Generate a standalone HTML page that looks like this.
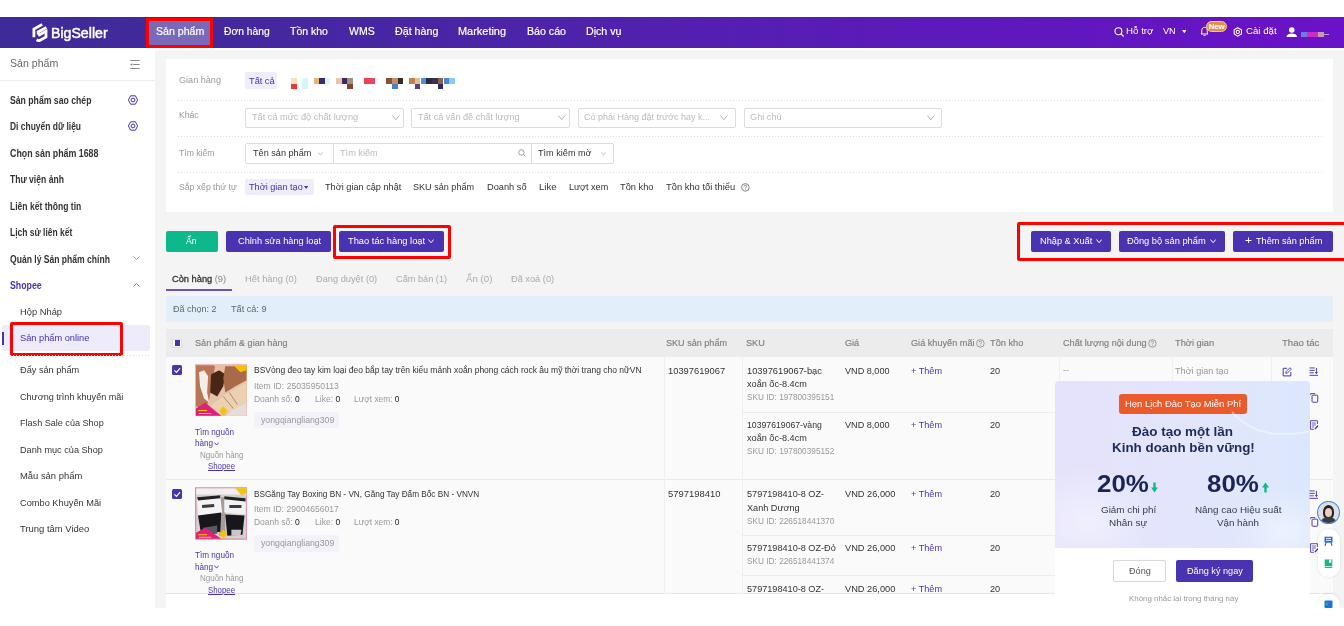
<!DOCTYPE html><html><head><meta charset="utf-8"><style>*{margin:0;padding:0}html,body{width:1344px;height:626px;overflow:hidden;background:#fff;position:relative;font-family:"Liberation Sans",sans-serif}
.t{position:absolute;white-space:nowrap;line-height:1}</style></head><body>
<div style="position:absolute;left:0px;top:17px;width:1344px;height:31px;background:linear-gradient(90deg,#3e2b97 0%,#4a25a6 35%,#5a1bb8 65%,#6a12c8 100%)"></div>
<div style="position:absolute;left:0px;top:48px;width:155px;height:560px;background:#fff"></div>
<div style="position:absolute;left:155px;top:50px;width:1189px;height:558px;background:#f4f4f4"></div>
<div style="position:absolute;left:146px;top:18px;width:67px;height:30px;background:#7a68b8"></div>
<div style="position:absolute;left:146px;top:18px;width:67px;height:30px;box-sizing:border-box;border:3px solid #f00"></div>
<div style="position:absolute;left:0px;top:80px;width:155px;height:1px;background:#ececec"></div>
<div style="position:absolute;left:2px;top:325px;width:148px;height:26px;background:#eeebfa;border-radius:3px"></div>
<div style="position:absolute;left:2px;top:332px;width:2px;height:13px;background:#4a33b0"></div>
<div style="position:absolute;left:9.7px;top:322.3px;width:113.6px;height:34.19999999999999px;box-sizing:border-box;border:3px solid #f00;border-radius:2px"></div>
<div style="position:absolute;left:165.6px;top:59.4px;width:1167.7px;height:153.1px;background:#fff"></div>
<div style="position:absolute;left:178px;top:99.6px;width:1144px;height:1.0px;background-image:linear-gradient(90deg,#ddd 50%,transparent 50%);background-size:3px 1px"></div>
<div style="position:absolute;left:178px;top:135.7px;width:1144px;height:1.0px;background-image:linear-gradient(90deg,#ddd 50%,transparent 50%);background-size:3px 1px"></div>
<div style="position:absolute;left:178px;top:172px;width:1144px;height:1px;background-image:linear-gradient(90deg,#ddd 50%,transparent 50%);background-size:3px 1px"></div>
<div style="position:absolute;left:245.4px;top:72px;width:31.299999999999983px;height:16.700000000000003px;background:#efedfb;border-radius:2px"></div>
<div style="position:absolute;left:245.3px;top:107.5px;width:158.3px;height:20.69999999999999px;box-sizing:border-box;border:1px solid #dcdcdc;border-radius:2px;background:#fff"></div>
<div style="position:absolute;left:411.2px;top:107.5px;width:158.40000000000003px;height:20.69999999999999px;box-sizing:border-box;border:1px solid #dcdcdc;border-radius:2px;background:#fff"></div>
<div style="position:absolute;left:577.6px;top:107.5px;width:158.0px;height:20.69999999999999px;box-sizing:border-box;border:1px solid #dcdcdc;border-radius:2px;background:#fff"></div>
<div style="position:absolute;left:744px;top:107.5px;width:198.29999999999995px;height:20.69999999999999px;box-sizing:border-box;border:1px solid #dcdcdc;border-radius:2px;background:#fff"></div>
<div style="position:absolute;left:245.3px;top:143px;width:368.99999999999994px;height:20.5px;box-sizing:border-box;border:1px solid #dcdcdc;border-radius:2px;background:#fff"></div>
<div style="position:absolute;left:332.5px;top:143px;width:1.0px;height:20.5px;background:#dcdcdc"></div>
<div style="position:absolute;left:531.3px;top:143px;width:1.0px;height:20.5px;background:#dcdcdc"></div>
<div style="position:absolute;left:245px;top:178.9px;width:69px;height:16.299999999999983px;background:#efedfb;border-radius:2px"></div>
<div style="position:absolute;left:165.6px;top:231px;width:52.599999999999994px;height:20.900000000000006px;background:#0db88a;border-radius:2px"></div>
<div style="position:absolute;left:226px;top:231px;width:105px;height:20.900000000000006px;background:#4a33b0;border-radius:2px"></div>
<div style="position:absolute;left:339.3px;top:231px;width:104.44999999999999px;height:20.900000000000006px;background:#4a33b0;border-radius:2px"></div>
<div style="position:absolute;left:333.3px;top:224.5px;width:118.0px;height:34.39999999999998px;box-sizing:border-box;border:3px solid #f00;border-radius:2px"></div>
<div style="position:absolute;left:1031.2px;top:231px;width:79.59999999999991px;height:20.5px;background:#4a33b0;border-radius:2px"></div>
<div style="position:absolute;left:1118.8px;top:231px;width:105.90000000000009px;height:20.5px;background:#4a33b0;border-radius:2px"></div>
<div style="position:absolute;left:1232.9px;top:231px;width:100.59999999999991px;height:20.5px;background:#4a33b0;border-radius:2px"></div>
<div style="position:absolute;left:1017.4px;top:221.5px;width:332.6px;height:39.69999999999999px;box-sizing:border-box;border:3px solid #f00;border-radius:2px"></div>
<div style="position:absolute;left:165.6px;top:289px;width:66.20000000000002px;height:2px;background:#6a52c6"></div>
<div style="position:absolute;left:165.6px;top:295.6px;width:1167.9px;height:26.599999999999966px;background:#e2eef9"></div>
<div style="position:absolute;left:165.6px;top:328.8px;width:1167.9px;height:27.80000000000001px;background:#ececec"></div>
<div style="position:absolute;left:172.3px;top:338.6px;width:9.699999999999989px;height:9.799999999999955px;box-sizing:border-box;border:1px solid #ddd;background:#fff"></div>
<div style="position:absolute;left:174.7px;top:340.2px;width:5.300000000000011px;height:5.400000000000034px;background:#4a33b0"></div>
<div style="position:absolute;left:165.6px;top:356.6px;width:1167.9px;height:236.89999999999998px;background:#fafafa"></div>
<div style="position:absolute;left:165.6px;top:479.3px;width:1167.9px;height:1.0px;background:#eaeaea"></div>
<div style="position:absolute;left:165.6px;top:593px;width:1167.9px;height:1px;background:#e6e6e6"></div>
<div style="position:absolute;left:165.6px;top:594px;width:1167.9px;height:14px;background:#fff"></div>
<div style="position:absolute;left:664.3px;top:356.6px;width:1.0px;height:236.89999999999998px;background:#efefef"></div>
<div style="position:absolute;left:742.4px;top:356.6px;width:1.0px;height:236.89999999999998px;background:#efefef"></div>
<div style="position:absolute;left:1059.4px;top:356.6px;width:1.0px;height:236.89999999999998px;background:#efefef"></div>
<div style="position:absolute;left:1171.5px;top:356.6px;width:1.0px;height:236.89999999999998px;background:#efefef"></div>
<div style="position:absolute;left:1271.2px;top:356.6px;width:1.0px;height:236.89999999999998px;background:#efefef"></div>
<div style="position:absolute;left:742.4px;top:411.6px;width:528.8000000000001px;height:1.0px;background:#ececec"></div>
<div style="position:absolute;left:742.4px;top:534.9px;width:528.8000000000001px;height:1.0px;background:#ececec"></div>
<div style="position:absolute;left:742.4px;top:575.4px;width:528.8000000000001px;height:1.0px;background:#ececec"></div>
<div style="position:absolute;left:172px;top:365.1px;width:10.400000000000006px;height:10.399999999999977px;background:#4a33b0;border-radius:1.5px"></div>
<svg style="position:absolute;left:172px;top:365.1px" width="10.4" height="10.4" viewBox="0 0 10 10"><path d="M2.3 5.2 L4.3 7.1 L7.8 3.1" stroke="#fff" stroke-width="1.1" fill="none"/></svg>
<svg style="position:absolute;left:194.5px;top:363.6px" width="52.5" height="52.8" viewBox="0 0 52 52">
<defs><filter id="bl1"><feGaussianBlur stdDeviation="0.7"/></filter></defs>
<rect x="0" y="0" width="52" height="52" fill="#f2b0b0"/>
<g filter="url(#bl1)">
<rect x="1" y="1" width="50" height="50" fill="#e4c4a6"/>
<path d="M1 1 L20 1 L18 14 L14 36 L10 44 L1 42Z" fill="#b87858"/>
<path d="M4 8 L9 6 L13 12 L12 28 L14 38 L9 34 L5 22Z" fill="#f4eee8"/>
<path d="M16 10 L24 6 L30 10 L28 22 L22 32 L15 28Z" fill="#4a2818"/>
<path d="M18 1 L34 1 L32 8 L24 6Z" fill="#e8c0a0"/>
<path d="M30 2 L51 2 L51 16 L40 22 L30 28 L28 14Z" fill="#a86a48"/>
<path d="M12 44 L30 30 L51 18 L51 38 L36 46 L22 50Z" fill="#ecd0b2"/>
<path d="M34 28 L42 40 M28 32 L38 44" stroke="#9a7a68" stroke-width="0.8"/>
<path d="M36 46 L51 38 L51 51 L30 51Z" fill="#e8dcd6"/>
</g>
<path d="M1 51 L1 44 L10 38 L26 51Z" fill="#e0207a"/>
<path d="M3 46 H12 M4 49 H16" stroke="#f5d000" stroke-width="1"/>
<path d="M38 1 L51 1 L51 6 L45 8Z" fill="#f5c400"/>
<path d="M24 46 L28 42 L32 46 L28 51Z" fill="#f5c400"/>
</svg>
<div style="position:absolute;left:254.2px;top:411.90000000000003px;width:85.30000000000001px;height:16.5px;background:#f3f2fb;border-radius:2px"></div>
<div style="position:absolute;left:172px;top:488.5px;width:10.400000000000006px;height:10.399999999999977px;background:#4a33b0;border-radius:1.5px"></div>
<svg style="position:absolute;left:172px;top:488.5px" width="10.4" height="10.4" viewBox="0 0 10 10"><path d="M2.3 5.2 L4.3 7.1 L7.8 3.1" stroke="#fff" stroke-width="1.1" fill="none"/></svg>
<svg style="position:absolute;left:194.5px;top:487px" width="52.5" height="53" viewBox="0 0 52 52">
<defs><filter id="bl2"><feGaussianBlur stdDeviation="0.6"/></filter></defs>
<rect x="0" y="0" width="52" height="52" fill="#f080b0"/>
<g filter="url(#bl2)">
<rect x="1.2" y="1.2" width="49.6" height="49.6" fill="#d4d0cc"/>
<rect x="1.2" y="1.2" width="49.6" height="6" fill="#f0eeee"/>
<path d="M24 10 L30 10 L30 48 L24 48Z" fill="#a89c94"/>
<path d="M2 10 L25 8 L27 26 L3 28Z" fill="#f4f4f4"/>
<path d="M2 10 L25 8 L25 11 L3 13Z" fill="#202020"/>
<path d="M29 9 L50 11 L50 27 L29 25Z" fill="#f2f2f2"/>
<path d="M29 9 L50 11 L50 14 L29 12Z" fill="#222"/>
<path d="M7 19 L19 18 M34 19 L46 19" stroke="#3a3a44" stroke-width="3"/>
<path d="M3 28 L26 25 L25 44 L6 46Z" fill="#16161a"/>
<path d="M30 27 L49 28 L47 47 L32 48Z" fill="#18181c"/>
<path d="M8 40 L22 38 L22 46 L9 47Z" fill="#5a5a62"/>
<path d="M36 42 L46 42 L45 48 L36 48Z" fill="#c8c8cc"/>
</g>
<path d="M1 51 L1 45 L10 40 L26 51Z" fill="#e0207a"/>
<path d="M3 47 H12 M4 49.5 H16" stroke="#f5d000" stroke-width="1"/>
<path d="M40 1 L51 1 L51 6 L46 8Z" fill="#f5c400"/>
<path d="M24 46 L28 42 L32 46 L28 51Z" fill="#f5c400"/>
</svg>
<div style="position:absolute;left:254.2px;top:535.3px;width:85.30000000000001px;height:16.5px;background:#f3f2fb;border-radius:2px"></div>
<div style="position:absolute;left:1055px;top:381px;width:255px;height:227px;background:#fff;border-radius:4px 4px 0 0"></div>
<div style="position:absolute;left:1055px;top:381px;width:255px;height:167px;background:linear-gradient(90deg,#e5e2fb 0%,#e2e6fc 60%,#dbe7fd 100%);border-radius:4px 4px 0 0"></div>
<div style="position:absolute;left:1118.6px;top:393.7px;width:128.0px;height:20.5px;background:#ea5a2a;border-radius:3px"></div>
<div style="position:absolute;left:1112.8px;top:560.3px;width:52.799999999999955px;height:21.700000000000045px;box-sizing:border-box;border:1px solid #d8d8d8;border-radius:2px;background:#fff"></div>
<div style="position:absolute;left:1175.8px;top:560.3px;width:77.0px;height:21.700000000000045px;background:#4a33b0;border-radius:2px"></div>
<svg style="position:absolute;left:30px;top:22px;" width="20" height="20" viewBox="0 0 20 20"><g fill="none" stroke="#fff" stroke-width="2.8" stroke-linejoin="miter" stroke-linecap="butt"><path d="M3.9 15.2 V7 L12.2 2.4"/><path d="M16.4 5.4 L8.2 9.9 V12.6"/><path d="M8.2 13.6 L16 9.3 V15 L8.8 19 L6.6 17.8"/></g></svg>
<svg style="position:absolute;left:1114px;top:27px;" width="10.5" height="10" viewBox="0 0 10.5 10"><circle cx="4.4" cy="4.2" r="3.5" fill="none" stroke="#fff" stroke-width="1.1"/><path d="M7 6.9 L9.6 9.5" stroke="#fff" stroke-width="1.2"/></svg>
<svg style="position:absolute;left:1181.5px;top:30px;" width="4.6" height="3.2" viewBox="0 0 4.6 3.2"><path d="M0 0 L4.6 0 L2.3 3.2Z" fill="#fff"/></svg>
<svg style="position:absolute;left:1199.8px;top:26.3px;" width="9" height="10.4" viewBox="0 0 9 10.4"><path d="M1 8 L1.8 7 L1.8 4.4 C1.8 2.5 3 1.3 4.5 1.3 C6 1.3 7.2 2.5 7.2 4.4 L7.2 7 L8 8Z" fill="none" stroke="#fff" stroke-width="1"/><path d="M3.4 9 C3.6 9.9 5.4 9.9 5.6 9" stroke="#fff" stroke-width="1" fill="none"/></svg>
<div style="position:absolute;left:1206px;top:20.6px;width:21.2px;height:11.4px;box-sizing:border-box;border-radius:6px;background:#e39048;border:1px solid #f6c890;color:#fff;font:bold 8px/9.4px 'Liberation Sans',sans-serif;text-align:center;letter-spacing:-0.2px">New</div>
<svg style="position:absolute;left:1232.6px;top:26.9px;" width="9.6" height="9.8" viewBox="0 0 10 10"><path d="M5 0.6 L8.8 2.8 L8.8 7.2 L5 9.4 L1.2 7.2 L1.2 2.8Z" fill="none" stroke="#fff" stroke-width="1.1"/><circle cx="5" cy="5" r="1.7" fill="none" stroke="#fff" stroke-width="1.1"/></svg>
<svg style="position:absolute;left:1286.2px;top:26.5px;" width="11.5" height="10.7" viewBox="0 0 11.5 10.7"><circle cx="5.75" cy="3" r="2.8" fill="#fff"/><path d="M0.3 10.7 C0.6 7.2 2.8 6.4 5.75 6.4 C8.7 6.4 10.9 7.2 11.2 10.7Z" fill="#fff"/></svg>
<div style="position:absolute;left:1301px;top:31.5px;width:5.9px;height:5px;background:#6a7ae0"></div><div style="position:absolute;left:1306.9px;top:31.5px;width:10.9px;height:5px;background:#d02ac8"></div><div style="position:absolute;left:1317.8px;top:31.5px;width:6px;height:5px;background:#c898b8"></div><div style="position:absolute;left:1323.8px;top:33.5px;width:5.4px;height:1px;background:#b8a0d8"></div>
<svg style="position:absolute;left:130.4px;top:59.5px;" width="9.8" height="9" viewBox="0 0 9.8 9"><path d="M0.3 0.5 H9.6 M3.2 4.5 H9.6 M0.3 8.5 H9.6" stroke="#888" stroke-width="1"/><path d="M0.2 4.5 L2.4 3 L2.4 6Z" fill="#888"/></svg>
<svg style="position:absolute;left:127.8px;top:95px;" width="10" height="10" viewBox="0 0 10 10"><path d="M2.6 0.8 L7.4 0.8 L9.6 5 L7.4 9.2 L2.6 9.2 L0.4 5Z" fill="none" stroke="#4a33b0" stroke-width="1"/><circle cx="5" cy="5" r="1.9" fill="none" stroke="#4a33b0" stroke-width="1"/></svg>
<svg style="position:absolute;left:127.8px;top:120.7px;" width="10" height="10" viewBox="0 0 10 10"><path d="M2.6 0.8 L7.4 0.8 L9.6 5 L7.4 9.2 L2.6 9.2 L0.4 5Z" fill="none" stroke="#4a33b0" stroke-width="1"/><circle cx="5" cy="5" r="1.9" fill="none" stroke="#4a33b0" stroke-width="1"/></svg>
<svg style="position:absolute;left:133.4px;top:256.3px;" width="7" height="4" viewBox="0 0 7 4"><path d="M0.4 0.4 L3.5 3.5 L6.6 0.4" fill="none" stroke="#999" stroke-width="0.9"/></svg>
<svg style="position:absolute;left:133.4px;top:283px;" width="7" height="4" viewBox="0 0 7 4"><path d="M0.4 3.6 L3.5 0.5 L6.6 3.6" fill="none" stroke="#777" stroke-width="0.9"/></svg>
<div style="position:absolute;left:10px;top:354.5px;width:140px;height:1px;background-image:linear-gradient(90deg,#ddd 50%,transparent 50%);background-size:3px 1px"></div>
<div style="position:absolute;left:290.9px;top:78.4px;width:5.8px;height:5.4px;background:#f5e2b8"></div><div style="position:absolute;left:290.9px;top:83.75px;width:5.8px;height:5.4px;background:#e83a3a"></div><div style="position:absolute;left:302px;top:78.4px;width:5.8px;height:5.4px;background:#d5f7fb"></div><div style="position:absolute;left:302px;top:83.75px;width:5.8px;height:5.4px;background:#d5f7fb"></div><div style="position:absolute;left:313.6px;top:78.4px;width:5.8px;height:5.4px;background:#e8b86a"></div><div style="position:absolute;left:319px;top:78.4px;width:5.8px;height:5.4px;background:#3a2a7a"></div><div style="position:absolute;left:324.6px;top:78.4px;width:5.8px;height:5.4px;background:#d8f8fc"></div><div style="position:absolute;left:335.9px;top:78.4px;width:5.8px;height:5.4px;background:#e8c8a8"></div><div style="position:absolute;left:341.6px;top:78.4px;width:5.8px;height:5.4px;background:#3a2a6a"></div><div style="position:absolute;left:347px;top:78.4px;width:5.8px;height:5.4px;background:#a09080"></div><div style="position:absolute;left:347px;top:83.75px;width:5.8px;height:5.4px;background:#7a4a30"></div><div style="position:absolute;left:364px;top:78.4px;width:5.8px;height:5.4px;background:#f04050"></div><div style="position:absolute;left:369.7px;top:78.4px;width:5.8px;height:5.4px;background:#e04868"></div><div style="position:absolute;left:386.4px;top:78.4px;width:5.8px;height:5.4px;background:#8a5030"></div><div style="position:absolute;left:392px;top:78.4px;width:5.8px;height:5.4px;background:#c09060"></div><div style="position:absolute;left:397.7px;top:78.4px;width:5.8px;height:5.4px;background:#3a2a2a"></div><div style="position:absolute;left:392px;top:83.75px;width:5.8px;height:5.4px;background:#4a80c8"></div><div style="position:absolute;left:409px;top:78.4px;width:5.8px;height:5.4px;background:#c08050"></div><div style="position:absolute;left:414.7px;top:78.4px;width:5.8px;height:5.4px;background:#e0c090"></div><div style="position:absolute;left:420.5px;top:78.4px;width:5.8px;height:5.4px;background:#5090d8"></div><div style="position:absolute;left:426.3px;top:78.4px;width:5.8px;height:5.4px;background:#2a2a40"></div><div style="position:absolute;left:432px;top:78.4px;width:5.8px;height:5.4px;background:#3a3050"></div><div style="position:absolute;left:437.7px;top:78.4px;width:5.8px;height:5.4px;background:#8a6050"></div><div style="position:absolute;left:443.5px;top:78.4px;width:5.8px;height:5.4px;background:#4888d8"></div><div style="position:absolute;left:449px;top:78.4px;width:5.8px;height:5.4px;background:#90c8f0"></div><div style="position:absolute;left:414.7px;top:83.75px;width:5.8px;height:5.4px;background:#5a4080"></div><div style="position:absolute;left:437.7px;top:83.75px;width:5.8px;height:5.4px;background:#2a2a60"></div>
<svg style="position:absolute;left:392px;top:115px;" width="7.6" height="5.2" viewBox="0 0 7.6 5.2"><path d="M0.4 0.5 L3.8 4.7 L7.199999999999999 0.5" fill="none" stroke="#aaa" stroke-width="0.9"/></svg>
<svg style="position:absolute;left:558px;top:115px;" width="7.6" height="5.2" viewBox="0 0 7.6 5.2"><path d="M0.4 0.5 L3.8 4.7 L7.199999999999999 0.5" fill="none" stroke="#aaa" stroke-width="0.9"/></svg>
<svg style="position:absolute;left:720.2px;top:115px;" width="7.6" height="5.2" viewBox="0 0 7.6 5.2"><path d="M0.4 0.5 L3.8 4.7 L7.199999999999999 0.5" fill="none" stroke="#aaa" stroke-width="0.9"/></svg>
<svg style="position:absolute;left:927px;top:115px;" width="7.6" height="5.2" viewBox="0 0 7.6 5.2"><path d="M0.4 0.5 L3.8 4.7 L7.199999999999999 0.5" fill="none" stroke="#aaa" stroke-width="0.9"/></svg>
<svg style="position:absolute;left:318.2px;top:152px;" width="5.1" height="3.6" viewBox="0 0 5.1 3.6"><path d="M0.4 0.5 L2.55 3.1 L4.699999999999999 0.5" fill="none" stroke="#bbb" stroke-width="0.9"/></svg>
<svg style="position:absolute;left:601px;top:152px;" width="5.1" height="3.6" viewBox="0 0 5.1 3.6"><path d="M0.4 0.5 L2.55 3.1 L4.699999999999999 0.5" fill="none" stroke="#bbb" stroke-width="0.9"/></svg>
<svg style="position:absolute;left:518px;top:149px;" width="8" height="8" viewBox="0 0 8 8"><circle cx="3.4" cy="3.4" r="2.7" fill="none" stroke="#999" stroke-width="0.9"/><path d="M5.4 5.4 L7.6 7.6" stroke="#999" stroke-width="0.9"/></svg>
<svg style="position:absolute;left:304.2px;top:186px;" width="4.2" height="3" viewBox="0 0 4.2 3"><path d="M0 0 L4.2 0 L2.1 3Z" fill="#4a33b0"/></svg>
<svg style="position:absolute;left:740.8px;top:183px;" width="8.8" height="8.8" viewBox="0 0 10 10"><circle cx="5" cy="5" r="4.3" fill="none" stroke="#666" stroke-width="0.9"/><path d="M3.6 3.9 C3.6 2.1 6.4 2.1 6.4 3.9 C6.4 5 5 5 5 6.2" fill="none" stroke="#666" stroke-width="0.9"/><circle cx="5" cy="7.6" r="0.55" fill="#666"/></svg>
<svg style="position:absolute;left:975.9px;top:339.3px;" width="8.8" height="8.8" viewBox="0 0 10 10"><circle cx="5" cy="5" r="4.3" fill="none" stroke="#888" stroke-width="0.9"/><path d="M3.6 3.9 C3.6 2.1 6.4 2.1 6.4 3.9 C6.4 5 5 5 5 6.2" fill="none" stroke="#888" stroke-width="0.9"/><circle cx="5" cy="7.6" r="0.55" fill="#888"/></svg>
<svg style="position:absolute;left:1148px;top:339.3px;" width="8.8" height="8.8" viewBox="0 0 10 10"><circle cx="5" cy="5" r="4.3" fill="none" stroke="#888" stroke-width="0.9"/><path d="M3.6 3.9 C3.6 2.1 6.4 2.1 6.4 3.9 C6.4 5 5 5 5 6.2" fill="none" stroke="#888" stroke-width="0.9"/><circle cx="5" cy="7.6" r="0.55" fill="#888"/></svg>
<svg style="position:absolute;left:428px;top:239.4px;" width="6.2" height="4.2" viewBox="0 0 6.2 4.2"><path d="M0.4 0.5 L3.1 3.7 L5.8 0.5" fill="none" stroke="#fff" stroke-width="1.0"/></svg>
<svg style="position:absolute;left:1096px;top:239.4px;" width="6.2" height="4.2" viewBox="0 0 6.2 4.2"><path d="M0.4 0.5 L3.1 3.7 L5.8 0.5" fill="none" stroke="#fff" stroke-width="1.0"/></svg>
<svg style="position:absolute;left:1210px;top:239.4px;" width="6.2" height="4.2" viewBox="0 0 6.2 4.2"><path d="M0.4 0.5 L3.1 3.7 L5.8 0.5" fill="none" stroke="#fff" stroke-width="1.0"/></svg>
<svg style="position:absolute;left:213.5px;top:441.90000000000003px;" width="5.2" height="3.6" viewBox="0 0 5.2 3.6"><path d="M0.4 0.5 L2.6 3.1 L4.8 0.5" fill="none" stroke="#4a33b0" stroke-width="0.9"/></svg>
<svg style="position:absolute;left:213.5px;top:565.3px;" width="5.2" height="3.6" viewBox="0 0 5.2 3.6"><path d="M0.4 0.5 L2.6 3.1 L4.8 0.5" fill="none" stroke="#4a33b0" stroke-width="0.9"/></svg>
<svg style="position:absolute;left:1282.3px;top:367px;" width="10" height="10.2" viewBox="0 0 10 10"><path d="M5 1.2 H1.2 V8.8 H8.8 V5" fill="none" stroke="#4a33b0" stroke-width="1"/><path d="M3.8 6.2 L4 4.6 L8 0.6 L9.4 2 L5.4 6Z" fill="none" stroke="#4a33b0" stroke-width="0.9"/></svg>
<svg style="position:absolute;left:1309px;top:367px;" width="9.6" height="9.4" viewBox="0 0 10 10"><path d="M0.5 1 H6 M0.5 3.6 H6 M0.5 6.2 H5 M0.5 8.9 H9.5" stroke="#4a33b0" stroke-width="1"/><path d="M7.8 1 V6.5" stroke="#4a33b0" stroke-width="1"/><path d="M6.2 5.4 L7.8 7.6 L9.4 5.4Z" fill="#4a33b0"/></svg>
<svg style="position:absolute;left:1310px;top:393px;" width="8.5" height="9.8" viewBox="0 0 8.5 10"><path d="M0.6 2.2 V0.6 H5.2" fill="none" stroke="#4a33b0" stroke-width="0.9"/><rect x="2" y="2.2" width="5.8" height="7.2" rx="0.8" fill="none" stroke="#4a33b0" stroke-width="1"/></svg>
<svg style="position:absolute;left:1309.5px;top:420.3px;" width="8.8" height="10" viewBox="0 0 9 10"><path d="M0.6 0.6 H7.6 V4 M0.6 0.6 V9.4 H4" fill="none" stroke="#4a33b0" stroke-width="0.9"/><path d="M2 3 H6 M2 5 H6 M2 7 H4" stroke="#4a33b0" stroke-width="0.8"/><path d="M5 9 L8.5 5.5" stroke="#4a33b0" stroke-width="1.4"/></svg>
<svg style="position:absolute;left:1309px;top:489.8px;" width="9.6" height="9.4" viewBox="0 0 10 10"><path d="M0.5 1 H6 M0.5 3.6 H6 M0.5 6.2 H5 M0.5 8.9 H9.5" stroke="#4a33b0" stroke-width="1"/><path d="M7.8 1 V6.5" stroke="#4a33b0" stroke-width="1"/><path d="M6.2 5.4 L7.8 7.6 L9.4 5.4Z" fill="#4a33b0"/></svg>
<svg style="position:absolute;left:1310px;top:517px;" width="8.5" height="9.8" viewBox="0 0 8.5 10"><path d="M0.6 2.2 V0.6 H5.2" fill="none" stroke="#4a33b0" stroke-width="0.9"/><rect x="2" y="2.2" width="5.8" height="7.2" rx="0.8" fill="none" stroke="#4a33b0" stroke-width="1"/></svg>
<svg style="position:absolute;left:1309.5px;top:543px;" width="8.8" height="10" viewBox="0 0 9 10"><path d="M0.6 0.6 H7.6 V4 M0.6 0.6 V9.4 H4" fill="none" stroke="#4a33b0" stroke-width="0.9"/><path d="M2 3 H6 M2 5 H6 M2 7 H4" stroke="#4a33b0" stroke-width="0.8"/><path d="M5 9 L8.5 5.5" stroke="#4a33b0" stroke-width="1.4"/></svg>
<svg style="position:absolute;left:1055px;top:381px;" width="255" height="167" viewBox="0 0 255 167"><defs><radialGradient id="cl" cx="50%" cy="50%" r="50%"><stop offset="0" stop-color="#fff" stop-opacity="0.45"/><stop offset="1" stop-color="#fff" stop-opacity="0"/></radialGradient></defs><ellipse cx="30" cy="140" rx="70" ry="55" fill="url(#cl)"/><ellipse cx="230" cy="150" rx="55" ry="45" fill="url(#cl)"/><path d="M177 31 Q205 62 255 50" fill="none" stroke="#fff" stroke-opacity="0.4" stroke-width="2"/></svg>
<svg style="position:absolute;left:1150.5px;top:481.5px;" width="7" height="11" viewBox="0 0 7 11"><path d="M3.5 0.5 V6.5" stroke="#12b886" stroke-width="2.4"/><path d="M0 5.6 L3.5 10.6 L7 5.6Z" fill="#12b886"/></svg>
<svg style="position:absolute;left:1261.5px;top:481.5px;" width="7" height="11" viewBox="0 0 7 11"><path d="M3.5 4.5 V10.5" stroke="#12b886" stroke-width="2.4"/><path d="M0 5.4 L3.5 0.4 L7 5.4Z" fill="#12b886"/></svg>
<div style="position:absolute;left:1317.3px;top:500.5px;width:23px;height:23.7px;box-sizing:border-box;border-radius:50%;border:1.5px solid #3a8ee8;background:#dfe0e6;overflow:hidden"><div style="position:absolute;left:5px;top:3px;width:11px;height:14px;border-radius:50% 50% 40% 40%;background:#2a2222"></div><div style="position:absolute;left:7px;top:6px;width:7px;height:9px;border-radius:50%;background:#e8cfc0"></div><div style="position:absolute;left:3px;top:15px;width:15px;height:10px;border-radius:50% 50% 0 0;background:#3a3a44"></div></div>
<div style="position:absolute;left:1317.5px;top:529.3px;width:22.5px;height:48px;border-radius:11px;background:#fff;box-shadow:0 0 3px rgba(0,0,0,0.1)"></div>
<svg style="position:absolute;left:1324px;top:535.9px;" width="9" height="10.4" viewBox="0 0 9 10"><path d="M0.5 0.5 H8.5 V6.5 H0.5Z" fill="#1f6fe0"/><path d="M2 2.2 H7 M2 4.2 H7" stroke="#fff" stroke-width="0.9"/><path d="M2 6.5 L1 9.5 M7 6.5 L8 9.5" stroke="#1f6fe0" stroke-width="1.2"/></svg>
<svg style="position:absolute;left:1324px;top:559px;" width="9" height="9.5" viewBox="0 0 9 10"><path d="M0.5 0.5 H8.5 V9.5 H0.5Z" fill="#18b87a"/><path d="M5 0.5 V4.5 L6.2 3.6 L7.4 4.5 V0.5" fill="#fff"/><path d="M0.5 8 H8.5" stroke="#fff" stroke-width="0.8"/></svg>
<div style="position:absolute;left:1317.5px;top:594px;width:22.5px;height:14px;border-radius:11px 11px 0 0;background:#fff;box-shadow:0 -1px 3px rgba(0,0,0,0.08)"></div>
<svg style="position:absolute;left:1324px;top:600px;" width="9" height="8" viewBox="0 0 9 8"><rect x="0.5" y="0.5" width="8" height="7.5" rx="1" fill="#1f6fe0"/><circle cx="3" cy="4" r="1.4" fill="#18b87a"/></svg>
<div style="position:absolute;left:0;top:608px;width:1344px;height:18px;background:#fff"></div>
<span class="t" id="t0" style="left:155.60px;top:26.45px;font-size:11.5px;color:#fff;transform:scaleX(0.9205);transform-origin:0 50%;-webkit-text-stroke:0.2px #fff;">Sản phẩm</span>
<span class="t" id="t1" style="left:223.90px;top:26.45px;font-size:11.5px;color:#fff;transform:scaleX(0.8983);transform-origin:0 50%;-webkit-text-stroke:0.2px #fff;">Đơn hàng</span>
<span class="t" id="t2" style="left:290.20px;top:26.45px;font-size:11.5px;color:#fff;transform:scaleX(0.9133);transform-origin:0 50%;-webkit-text-stroke:0.2px #fff;">Tồn kho</span>
<span class="t" id="t3" style="left:348.90px;top:26.45px;font-size:11.5px;color:#fff;transform:scaleX(0.9129);transform-origin:0 50%;-webkit-text-stroke:0.2px #fff;">WMS</span>
<span class="t" id="t4" style="left:394.60px;top:26.45px;font-size:11.5px;color:#fff;transform:scaleX(0.9292);transform-origin:0 50%;-webkit-text-stroke:0.2px #fff;">Đặt hàng</span>
<span class="t" id="t5" style="left:458.20px;top:26.45px;font-size:11.5px;color:#fff;transform:scaleX(0.9507);transform-origin:0 50%;-webkit-text-stroke:0.2px #fff;">Marketing</span>
<span class="t" id="t6" style="left:526.50px;top:26.45px;font-size:11.5px;color:#fff;transform:scaleX(0.9235);transform-origin:0 50%;-webkit-text-stroke:0.2px #fff;">Báo cáo</span>
<span class="t" id="t7" style="left:585.70px;top:26.45px;font-size:11.5px;color:#fff;transform:scaleX(0.9248);transform-origin:0 50%;-webkit-text-stroke:0.2px #fff;">Dịch vụ</span>
<span class="t" id="t8" style="left:51.10px;top:24.80px;font-size:15px;color:#fff;transform:scaleX(0.9428);transform-origin:0 50%;-webkit-text-stroke:0.5px #fff;">BigSeller</span>
<span class="t" id="t9" style="left:1126.20px;top:27.30px;font-size:9px;color:#fff;transform:scaleX(1.0811);transform-origin:0 50%;">Hỗ trợ</span>
<span class="t" id="t10" style="left:1162.70px;top:27.30px;font-size:9px;color:#fff;transform:scaleX(1.0144);transform-origin:0 50%;">VN</span>
<span class="t" id="t11" style="left:1246.40px;top:27.30px;font-size:9px;color:#fff;transform:scaleX(1.0746);transform-origin:0 50%;">Cài đặt</span>
<span class="t" id="t12" style="left:9.60px;top:58.25px;font-size:11.5px;color:#666;transform:scaleX(0.9205);transform-origin:0 50%;">Sản phẩm</span>
<span class="t" id="t13" style="left:9.60px;top:95.15px;font-size:10.5px;color:#333;font-weight:700;transform:scaleX(0.8258);transform-origin:0 50%;">Sản phẩm sao chép</span>
<span class="t" id="t14" style="left:9.60px;top:121.45px;font-size:10.5px;color:#333;font-weight:700;transform:scaleX(0.8058);transform-origin:0 50%;">Di chuyển dữ liệu</span>
<span class="t" id="t15" style="left:9.60px;top:148.05px;font-size:10.5px;color:#333;font-weight:700;transform:scaleX(0.8422);transform-origin:0 50%;">Chọn sản phẩm 1688</span>
<span class="t" id="t16" style="left:9.60px;top:173.85px;font-size:10.5px;color:#333;font-weight:700;transform:scaleX(0.8177);transform-origin:0 50%;">Thư viện ảnh</span>
<span class="t" id="t17" style="left:9.60px;top:200.85px;font-size:10.5px;color:#333;font-weight:700;transform:scaleX(0.8152);transform-origin:0 50%;">Liên kết thông tin</span>
<span class="t" id="t18" style="left:9.60px;top:227.15px;font-size:10.5px;color:#333;font-weight:700;transform:scaleX(0.8088);transform-origin:0 50%;">Lịch sử liên kết</span>
<span class="t" id="t19" style="left:9.60px;top:253.55px;font-size:10.5px;color:#333;font-weight:700;transform:scaleX(0.8155);transform-origin:0 50%;">Quản lý Sản phẩm chính</span>
<span class="t" id="t20" style="left:9.60px;top:280.15px;font-size:10.5px;color:#4a33b0;font-weight:700;transform:scaleX(0.8370);transform-origin:0 50%;">Shopee</span>
<span class="t" id="t21" style="left:20.30px;top:306.55px;font-size:9.5px;color:#363636;transform:scaleX(0.9822);transform-origin:0 50%;">Hộp Nháp</span>
<span class="t" id="t22" style="left:20.30px;top:332.75px;font-size:9.5px;color:#4a33b0;transform:scaleX(0.9733);transform-origin:0 50%;">Sản phẩm online</span>
<span class="t" id="t23" style="left:20.30px;top:365.25px;font-size:9.5px;color:#363636;transform:scaleX(0.9663);transform-origin:0 50%;">Đẩy sản phẩm</span>
<span class="t" id="t24" style="left:20.30px;top:392.25px;font-size:9.5px;color:#363636;transform:scaleX(0.9558);transform-origin:0 50%;">Chương trình khuyến mãi</span>
<span class="t" id="t25" style="left:20.30px;top:417.75px;font-size:9.5px;color:#363636;transform:scaleX(0.9546);transform-origin:0 50%;">Flash Sale của Shop</span>
<span class="t" id="t26" style="left:20.30px;top:444.65px;font-size:9.5px;color:#363636;transform:scaleX(0.9629);transform-origin:0 50%;">Danh mục của Shop</span>
<span class="t" id="t27" style="left:20.30px;top:471.15px;font-size:9.5px;color:#363636;transform:scaleX(0.9902);transform-origin:0 50%;">Mẫu sản phẩm</span>
<span class="t" id="t28" style="left:20.30px;top:497.85px;font-size:9.5px;color:#363636;transform:scaleX(0.9721);transform-origin:0 50%;">Combo Khuyến Mãi</span>
<span class="t" id="t29" style="left:20.30px;top:523.95px;font-size:9.5px;color:#363636;transform:scaleX(0.9945);transform-origin:0 50%;">Trung tâm Video</span>
<span class="t" id="t30" style="left:178.80px;top:76.10px;font-size:9px;color:#999;transform:scaleX(1.0107);transform-origin:0 50%;">Gian hàng</span>
<span class="t" id="t31" style="left:178.80px;top:110.70px;font-size:9px;color:#999;transform:scaleX(0.9600);transform-origin:0 50%;">Khác</span>
<span class="t" id="t32" style="left:178.80px;top:148.90px;font-size:9px;color:#999;transform:scaleX(0.9600);transform-origin:0 50%;">Tìm kiếm</span>
<span class="t" id="t33" style="left:178.80px;top:182.70px;font-size:9px;color:#999;transform:scaleX(0.9600);transform-origin:0 50%;">Sắp xếp thứ tự</span>
<span class="t" id="t34" style="left:248.50px;top:75.55px;font-size:9.5px;color:#4a33b0;transform:scaleX(0.9697);transform-origin:0 50%;">Tất cả</span>
<span class="t" id="t35" style="left:251.70px;top:113.35px;font-size:9px;color:#bbb;transform:scaleX(1.0202);transform-origin:0 50%;">Tất cả mức độ chất lượng</span>
<span class="t" id="t36" style="left:417.60px;top:113.35px;font-size:9px;color:#bbb;transform:scaleX(1.0110);transform-origin:0 50%;">Tất cả vấn đề chất lượng</span>
<span class="t" id="t37" style="left:584.00px;top:113.35px;font-size:9px;color:#bbb;transform:scaleX(1.0006);transform-origin:0 50%;">Có phải Hàng đặt trước hay k...</span>
<span class="t" id="t38" style="left:750.40px;top:113.35px;font-size:9px;color:#bbb;transform:scaleX(1.0183);transform-origin:0 50%;">Ghi chú</span>
<span class="t" id="t39" style="left:253.10px;top:147.85px;font-size:9.5px;color:#333;transform:scaleX(0.9615);transform-origin:0 50%;">Tên sản phẩm</span>
<span class="t" id="t40" style="left:339.90px;top:148.70px;font-size:9px;color:#bbb;transform:scaleX(1.0189);transform-origin:0 50%;">Tìm kiếm</span>
<span class="t" id="t41" style="left:538.40px;top:148.45px;font-size:9.5px;color:#333;transform:scaleX(0.9600);transform-origin:0 50%;">Tìm kiếm mờ</span>
<span class="t" id="t42" style="left:248.80px;top:182.50px;font-size:9px;color:#4a33b0;transform:scaleX(1.0162);transform-origin:0 50%;">Thời gian tạo</span>
<span class="t" id="t43" style="left:324.50px;top:182.50px;font-size:9px;color:#333;transform:scaleX(1.0180);transform-origin:0 50%;">Thời gian cập nhật</span>
<span class="t" id="t44" style="left:412.90px;top:182.50px;font-size:9px;color:#333;transform:scaleX(1.0092);transform-origin:0 50%;">SKU sản phẩm</span>
<span class="t" id="t45" style="left:486.60px;top:182.50px;font-size:9px;color:#333;transform:scaleX(1.0280);transform-origin:0 50%;">Doanh số</span>
<span class="t" id="t46" style="left:538.60px;top:182.50px;font-size:9px;color:#333;transform:scaleX(1.0690);transform-origin:0 50%;">Like</span>
<span class="t" id="t47" style="left:568.60px;top:182.50px;font-size:9px;color:#333;transform:scaleX(1.0064);transform-origin:0 50%;">Lượt xem</span>
<span class="t" id="t48" style="left:620.40px;top:182.50px;font-size:9px;color:#333;transform:scaleX(1.0302);transform-origin:0 50%;">Tồn kho</span>
<span class="t" id="t49" style="left:666.30px;top:182.50px;font-size:9px;color:#333;transform:scaleX(1.0387);transform-origin:0 50%;">Tồn kho tối thiểu</span>
<span class="t" id="t50" style="left:186.40px;top:237.00px;font-size:9px;color:#fff;transform:scaleX(0.9600);transform-origin:0 50%;">Ẩn</span>
<span class="t" id="t51" style="left:237.70px;top:236.80px;font-size:9px;color:#fff;transform:scaleX(1.0248);transform-origin:0 50%;">Chỉnh sửa hàng loạt</span>
<span class="t" id="t52" style="left:347.80px;top:237.00px;font-size:9px;color:#fff;transform:scaleX(1.0343);transform-origin:0 50%;">Thao tác hàng loạt</span>
<span class="t" id="t53" style="left:1039.60px;top:236.80px;font-size:9px;color:#fff;transform:scaleX(1.0247);transform-origin:0 50%;">Nhập &amp; Xuất</span>
<span class="t" id="t54" style="left:1127.10px;top:236.80px;font-size:9px;color:#fff;transform:scaleX(1.0349);transform-origin:0 50%;">Đồng bộ sản phẩm</span>
<span class="t" id="t55" style="left:1244.90px;top:236.30px;font-size:10px;color:#fff;transform:scaleX(1.2000);transform-origin:0 50%;">+</span>
<span class="t" id="t56" style="left:1256.40px;top:236.80px;font-size:9px;color:#fff;transform:scaleX(1.0195);transform-origin:0 50%;">Thêm sản phẩm</span>
<span class="t" id="t57" style="left:172.40px;top:274.45px;font-size:9.5px;color:#333;transform:scaleX(0.9755);transform-origin:0 50%;"><span style='-webkit-text-stroke:0.3px #333'>Còn hàng</span> <span style='color:#888'>(9)</span></span>
<span class="t" id="t58" style="left:244.90px;top:274.45px;font-size:9.5px;color:#aaa;transform:scaleX(0.9831);transform-origin:0 50%;">Hết hàng (0)</span>
<span class="t" id="t59" style="left:315.80px;top:274.45px;font-size:9.5px;color:#aaa;transform:scaleX(0.9740);transform-origin:0 50%;">Đang duyệt (0)</span>
<span class="t" id="t60" style="left:395.90px;top:274.45px;font-size:9.5px;color:#aaa;transform:scaleX(0.9676);transform-origin:0 50%;">Cấm bán (1)</span>
<span class="t" id="t61" style="left:466.00px;top:274.45px;font-size:9.5px;color:#aaa;transform:scaleX(1.0188);transform-origin:0 50%;">Ẩn (0)</span>
<span class="t" id="t62" style="left:511.10px;top:274.45px;font-size:9.5px;color:#aaa;transform:scaleX(0.9718);transform-origin:0 50%;">Đã xoá (0)</span>
<span class="t" id="t63" style="left:172.70px;top:304.50px;font-size:9px;color:#666;transform:scaleX(1.0011);transform-origin:0 50%;">Đã chọn: 2</span>
<span class="t" id="t64" style="left:231.40px;top:304.50px;font-size:9px;color:#666;transform:scaleX(1.0137);transform-origin:0 50%;">Tất cả: 9</span>
<span class="t" id="t65" style="left:195.20px;top:338.45px;font-size:9.5px;color:#7e7e7e;transform:scaleX(0.9580);transform-origin:0 50%;-webkit-text-stroke:0.15px #7e7e7e;">Sản phẩm &amp; gian hàng</span>
<span class="t" id="t66" style="left:666.30px;top:338.45px;font-size:9.5px;color:#7e7e7e;transform:scaleX(0.9543);transform-origin:0 50%;-webkit-text-stroke:0.15px #7e7e7e;">SKU sản phẩm</span>
<span class="t" id="t67" style="left:745.70px;top:338.45px;font-size:9.5px;color:#7e7e7e;transform:scaleX(0.9600);transform-origin:0 50%;-webkit-text-stroke:0.15px #7e7e7e;">SKU</span>
<span class="t" id="t68" style="left:844.70px;top:338.45px;font-size:9.5px;color:#7e7e7e;transform:scaleX(0.9600);transform-origin:0 50%;-webkit-text-stroke:0.15px #7e7e7e;">Giá</span>
<span class="t" id="t69" style="left:910.70px;top:338.45px;font-size:9.5px;color:#7e7e7e;transform:scaleX(0.9634);transform-origin:0 50%;-webkit-text-stroke:0.15px #7e7e7e;">Giá khuyến mãi</span>
<span class="t" id="t70" style="left:990.20px;top:338.45px;font-size:9.5px;color:#7e7e7e;transform:scaleX(0.9702);transform-origin:0 50%;-webkit-text-stroke:0.15px #7e7e7e;">Tồn kho</span>
<span class="t" id="t71" style="left:1062.50px;top:338.45px;font-size:9.5px;color:#7e7e7e;transform:scaleX(0.9612);transform-origin:0 50%;-webkit-text-stroke:0.15px #7e7e7e;">Chất lượng nội dung</span>
<span class="t" id="t72" style="left:1174.90px;top:338.45px;font-size:9.5px;color:#7e7e7e;transform:scaleX(0.9771);transform-origin:0 50%;-webkit-text-stroke:0.15px #7e7e7e;">Thời gian</span>
<span class="t" id="t73" style="left:1282.40px;top:338.45px;font-size:9.5px;color:#7e7e7e;transform:scaleX(1.0076);transform-origin:0 50%;-webkit-text-stroke:0.15px #7e7e7e;">Thao tác</span>
<span class="t" id="t74" style="left:254.40px;top:366.30px;font-size:9px;color:#333;transform:scaleX(0.9425);transform-origin:0 50%;">BSVòng đeo tay kim loại đeo bắp tay trên kiểu mảnh xoắn phong cách rock âu mỹ thời trang cho nữVN</span>
<span class="t" id="t75" style="left:254.10px;top:381.70px;font-size:9px;color:#999;transform:scaleX(0.9596);transform-origin:0 50%;">Item ID: 25035950113</span>
<span class="t" id="t76" style="left:254.10px;top:394.70px;font-size:9px;color:#999;transform:scaleX(0.9417);transform-origin:0 50%;">Doanh số: <span style='color:#222'>0</span></span>
<span class="t" id="t77" style="left:314.70px;top:394.70px;font-size:9px;color:#999;transform:scaleX(0.9508);transform-origin:0 50%;">Like: <span style='color:#222'>0</span></span>
<span class="t" id="t78" style="left:354.30px;top:394.70px;font-size:9px;color:#999;transform:scaleX(0.9295);transform-origin:0 50%;">Lượt xem: <span style='color:#222'>0</span></span>
<span class="t" id="t79" style="left:260.50px;top:415.60px;font-size:9px;color:#999;transform:scaleX(0.9692);transform-origin:0 50%;">yongqiangliang309</span>
<span class="t" id="t80" style="left:194.70px;top:428.05px;font-size:8.5px;color:#4a33b0;transform:scaleX(0.9600);transform-origin:0 50%;">Tìm nguồn</span>
<span class="t" id="t81" style="left:194.70px;top:439.25px;font-size:8.5px;color:#4a33b0;transform:scaleX(0.9600);transform-origin:0 50%;">hàng</span>
<span class="t" id="t82" style="left:199.60px;top:450.65px;font-size:8.5px;color:#999;transform:scaleX(0.9380);transform-origin:0 50%;">Nguồn hàng</span>
<span class="t" id="t83" style="left:207.70px;top:462.25px;font-size:8.5px;color:#4a33b0;transform:scaleX(0.9225);transform-origin:0 50%;"><u>Shopee</u></span>
<span class="t" id="t84" style="left:254.40px;top:489.70px;font-size:9px;color:#333;transform:scaleX(0.9129);transform-origin:0 50%;">BSGăng Tay Boxing BN - VN, Găng Tay Đấm Bốc BN - VNVN</span>
<span class="t" id="t85" style="left:254.10px;top:505.10px;font-size:9px;color:#999;transform:scaleX(0.9523);transform-origin:0 50%;">Item ID: 29004656017</span>
<span class="t" id="t86" style="left:254.10px;top:518.10px;font-size:9px;color:#999;transform:scaleX(0.9417);transform-origin:0 50%;">Doanh số: <span style='color:#222'>0</span></span>
<span class="t" id="t87" style="left:314.70px;top:518.10px;font-size:9px;color:#999;transform:scaleX(0.9508);transform-origin:0 50%;">Like: <span style='color:#222'>0</span></span>
<span class="t" id="t88" style="left:354.30px;top:518.10px;font-size:9px;color:#999;transform:scaleX(0.9295);transform-origin:0 50%;">Lượt xem: <span style='color:#222'>0</span></span>
<span class="t" id="t89" style="left:260.50px;top:539.00px;font-size:9px;color:#999;transform:scaleX(0.9692);transform-origin:0 50%;">yongqiangliang309</span>
<span class="t" id="t90" style="left:194.70px;top:551.45px;font-size:8.5px;color:#4a33b0;transform:scaleX(0.9600);transform-origin:0 50%;">Tìm nguồn</span>
<span class="t" id="t91" style="left:194.70px;top:562.65px;font-size:8.5px;color:#4a33b0;transform:scaleX(0.9600);transform-origin:0 50%;">hàng</span>
<span class="t" id="t92" style="left:199.60px;top:574.05px;font-size:8.5px;color:#999;transform:scaleX(0.9380);transform-origin:0 50%;">Nguồn hàng</span>
<span class="t" id="t93" style="left:207.70px;top:585.65px;font-size:8.5px;color:#4a33b0;transform:scaleX(0.9225);transform-origin:0 50%;"><u>Shopee</u></span>
<span class="t" id="t94" style="left:667.60px;top:365.85px;font-size:9.5px;color:#333;transform:scaleX(0.9827);transform-origin:0 50%;">10397619067</span>
<span class="t" id="t95" style="left:746.80px;top:365.85px;font-size:9.5px;color:#333;transform:scaleX(0.9779);transform-origin:0 50%;">10397619067-bạc</span>
<span class="t" id="t96" style="left:746.80px;top:379.15px;font-size:9.5px;color:#333;transform:scaleX(0.9600);transform-origin:0 50%;">xoắn ốc-8.4cm</span>
<span class="t" id="t97" style="left:746.80px;top:393.15px;font-size:8.5px;color:#999;transform:scaleX(0.9721);transform-origin:0 50%;">SKU ID: 197800395151</span>
<span class="t" id="t98" style="left:845.20px;top:365.85px;font-size:9.5px;color:#333;transform:scaleX(0.9593);transform-origin:0 50%;">VND 8,000</span>
<span class="t" id="t99" style="left:911.10px;top:365.85px;font-size:9.5px;color:#4a33b0;transform:scaleX(0.9600);transform-origin:0 50%;">+ Thêm</span>
<span class="t" id="t100" style="left:990.30px;top:365.85px;font-size:9.5px;color:#333;transform:scaleX(0.9600);transform-origin:0 50%;">20</span>
<span class="t" id="t101" style="left:746.80px;top:420.05px;font-size:9.5px;color:#333;transform:scaleX(0.9139);transform-origin:0 50%;">10397619067-vàng</span>
<span class="t" id="t102" style="left:746.80px;top:433.35px;font-size:9.5px;color:#333;transform:scaleX(0.9600);transform-origin:0 50%;">xoắn ốc-8.4cm</span>
<span class="t" id="t103" style="left:746.80px;top:447.35px;font-size:8.5px;color:#999;transform:scaleX(0.9721);transform-origin:0 50%;">SKU ID: 197800395152</span>
<span class="t" id="t104" style="left:845.20px;top:420.05px;font-size:9.5px;color:#333;transform:scaleX(0.9593);transform-origin:0 50%;">VND 8,000</span>
<span class="t" id="t105" style="left:911.10px;top:420.05px;font-size:9.5px;color:#4a33b0;transform:scaleX(0.9600);transform-origin:0 50%;">+ Thêm</span>
<span class="t" id="t106" style="left:990.30px;top:420.05px;font-size:9.5px;color:#333;transform:scaleX(0.9600);transform-origin:0 50%;">20</span>
<span class="t" id="t107" style="left:667.60px;top:489.25px;font-size:9.5px;color:#333;transform:scaleX(0.9922);transform-origin:0 50%;">5797198410</span>
<span class="t" id="t108" style="left:746.80px;top:489.25px;font-size:9.5px;color:#333;transform:scaleX(0.9600);transform-origin:0 50%;">5797198410-8 OZ-</span>
<span class="t" id="t109" style="left:746.80px;top:502.55px;font-size:9.5px;color:#333;transform:scaleX(0.9600);transform-origin:0 50%;">Xanh Dương</span>
<span class="t" id="t110" style="left:746.80px;top:516.55px;font-size:8.5px;color:#999;transform:scaleX(0.9721);transform-origin:0 50%;">SKU ID: 226518441370</span>
<span class="t" id="t111" style="left:845.20px;top:489.25px;font-size:9.5px;color:#333;transform:scaleX(0.9718);transform-origin:0 50%;">VND 26,000</span>
<span class="t" id="t112" style="left:911.10px;top:489.25px;font-size:9.5px;color:#4a33b0;transform:scaleX(0.9600);transform-origin:0 50%;">+ Thêm</span>
<span class="t" id="t113" style="left:990.30px;top:489.25px;font-size:9.5px;color:#333;transform:scaleX(0.9600);transform-origin:0 50%;">20</span>
<span class="t" id="t114" style="left:746.80px;top:543.25px;font-size:9.5px;color:#333;transform:scaleX(0.9600);transform-origin:0 50%;">5797198410-8 OZ-Đỏ</span>
<span class="t" id="t115" style="left:746.80px;top:557.25px;font-size:8.5px;color:#999;transform:scaleX(0.9721);transform-origin:0 50%;">SKU ID: 226518441374</span>
<span class="t" id="t116" style="left:845.20px;top:543.25px;font-size:9.5px;color:#333;transform:scaleX(0.9718);transform-origin:0 50%;">VND 26,000</span>
<span class="t" id="t117" style="left:911.10px;top:543.25px;font-size:9.5px;color:#4a33b0;transform:scaleX(0.9600);transform-origin:0 50%;">+ Thêm</span>
<span class="t" id="t118" style="left:990.30px;top:543.25px;font-size:9.5px;color:#333;transform:scaleX(0.9600);transform-origin:0 50%;">20</span>
<span class="t" id="t119" style="left:746.80px;top:584.15px;font-size:9.5px;color:#333;transform:scaleX(0.9600);transform-origin:0 50%;">5797198410-8 OZ-</span>
<span class="t" id="t120" style="left:845.20px;top:584.15px;font-size:9.5px;color:#333;transform:scaleX(0.9718);transform-origin:0 50%;">VND 26,000</span>
<span class="t" id="t121" style="left:911.10px;top:584.15px;font-size:9.5px;color:#4a33b0;transform:scaleX(0.9600);transform-origin:0 50%;">+ Thêm</span>
<span class="t" id="t122" style="left:990.30px;top:584.15px;font-size:9.5px;color:#333;transform:scaleX(0.9600);transform-origin:0 50%;">20</span>
<span class="t" id="t123" style="left:1062.90px;top:366.10px;font-size:9px;color:#999;transform:scaleX(0.9600);transform-origin:0 50%;">--</span>
<span class="t" id="t124" style="left:1174.90px;top:365.75px;font-size:9.5px;color:#999;transform:scaleX(0.9600);transform-origin:0 50%;">Thời gian tạo</span>
<span class="t" id="t125" style="left:1124.90px;top:399.25px;font-size:9.5px;color:#fff;transform:scaleX(0.9966);transform-origin:0 50%;">Hẹn Lịch Đào Tạo Miễn Phí</span>
<span class="t" id="t126" style="left:1132.30px;top:424.90px;font-size:13px;color:#1e2a5a;font-weight:700;transform:scaleX(1.0359);transform-origin:0 50%;">Đào tạo một lần</span>
<span class="t" id="t127" style="left:1111.50px;top:440.50px;font-size:13px;color:#1e2a5a;font-weight:700;transform:scaleX(1.0297);transform-origin:0 50%;">Kinh doanh bền vững!</span>
<span class="t" id="t128" style="left:1097.10px;top:472.20px;font-size:24px;color:#1a2456;font-weight:700;transform:scaleX(1.0804);transform-origin:0 50%;">20%</span>
<span class="t" id="t129" style="left:1206.90px;top:472.20px;font-size:24px;color:#1a2456;font-weight:700;transform:scaleX(1.0804);transform-origin:0 50%;">80%</span>
<span class="t" id="t130" style="left:1100.50px;top:504.75px;font-size:9.5px;color:#333a55;transform:scaleX(1.0347);transform-origin:0 50%;">Giảm chi phí</span>
<span class="t" id="t131" style="left:1108.60px;top:517.85px;font-size:9.5px;color:#333a55;transform:scaleX(1.0445);transform-origin:0 50%;">Nhân sự</span>
<span class="t" id="t132" style="left:1194.60px;top:504.75px;font-size:9.5px;color:#333a55;transform:scaleX(1.0363);transform-origin:0 50%;">Nâng cao Hiệu suất</span>
<span class="t" id="t133" style="left:1216.90px;top:517.85px;font-size:9.5px;color:#333a55;transform:scaleX(1.0291);transform-origin:0 50%;">Vận hành</span>
<span class="t" id="t134" style="left:1128.90px;top:566.25px;font-size:9.5px;color:#555;transform:scaleX(0.9600);transform-origin:0 50%;">Đóng</span>
<span class="t" id="t135" style="left:1186.90px;top:566.25px;font-size:9.5px;color:#fff;transform:scaleX(0.9600);transform-origin:0 50%;">Đăng ký ngay</span>
<span class="t" id="t136" style="left:1128.70px;top:595.25px;font-size:7.5px;color:#999;transform:scaleX(1.0532);transform-origin:0 50%;">Không nhắc lại trong tháng này</span>

</body></html>
